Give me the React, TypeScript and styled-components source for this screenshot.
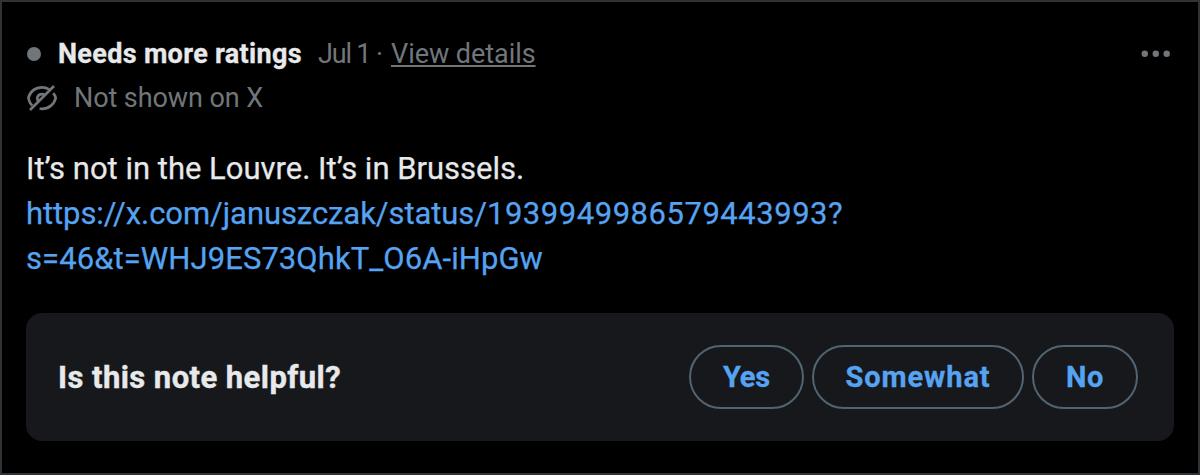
import React from 'react';
import styled, { createGlobalStyle } from 'styled-components';

const GlobalStyle = createGlobalStyle`
  * { box-sizing: border-box; }
  body { margin: 0; background: #000; }
`;

const Card = styled.article`
  width: 1200px;
  height: 475px;
  padding: 30px 24px 0;
  border: 2px solid #2f3336;
  background: #000;
  color: #e7e9ea;
  font-family: Roboto, "Liberation Sans", sans-serif;
  white-space: nowrap;
`;

const StatusRow = styled.header`
  display: flex;
  align-items: center;
  height: 44px;
  font-size: 27px;
  color: #71767b;
`;

const StatusDot = styled.span`
  width: 14px;
  height: 14px;
  margin: 0 17px 0 1px;
  border-radius: 50%;
  background: #71767b;
`;

const Status = styled.strong`
  width: 260px;
  font-weight: 700;
  letter-spacing: 0.32px;
  color: #e7e9ea;
  -webkit-text-stroke: 0.3px currentColor;
`;

const DateText = styled.span`
  width: 58px;
  letter-spacing: -1.1px;
  word-spacing: -0.5px;
`;

const Separator = styled.span`
  width: 15px;
`;

const DetailsLink = styled.a`
  letter-spacing: -0.05px;
  text-decoration: underline;
  text-decoration-thickness: 2px;
  text-underline-offset: 2px;
`;

const MoreButton = styled.button`
  display: flex;
  margin-left: auto;
  margin-right: 4px;
  padding: 0;
  border: 0;
  background: none;
  color: #71767b;
`;

const VisibilityRow = styled.div`
  display: flex;
  align-items: center;
  gap: 16px;
  height: 44px;
  font-size: 27px;
  letter-spacing: -0.08px;
  color: #71767b;
`;

const NoteText = styled.p`
  margin: 26px 0 0;
  font-size: 31px;
  line-height: 45px;
  -webkit-text-stroke: 0.25px currentColor;
`;

const NoteLine = styled.span`
  display: block;
`;

const Tracked = styled.span<{ $tracking: number }>`
  letter-spacing: ${({ $tracking }) => $tracking}px;
`;

const NoteLink = styled.a`
  color: #56a3f1;
`;

const RatingPanel = styled.section`
  display: flex;
  align-items: center;
  justify-content: space-between;
  height: 128px;
  margin-top: 32px;
  padding: 0 36px 0 32px;
  border-radius: 16px;
  background: #16181c;
`;

const Question = styled.h2`
  margin: 0;
  font-size: 31px;
  font-weight: 700;
  letter-spacing: 0.43px;
  -webkit-text-stroke: 0.4px currentColor;
`;

const Choices = styled.div`
  display: flex;
  gap: 8px;
`;

const Choice = styled.button<{ $width: number; $tracking: number }>`
  width: ${({ $width }) => $width}px;
  height: 64px;
  padding: 0;
  border: 2px solid #536471;
  border-radius: 32px;
  background: transparent;
  color: #56a3f1;
  font: 700 29px Roboto, "Liberation Sans", sans-serif;
  letter-spacing: ${({ $tracking }) => $tracking}px;
  -webkit-text-stroke: 0.3px currentColor;
`;

const choices = [
  { label: 'Yes', width: 115, tracking: -0.2 },
  { label: 'Somewhat', width: 212, tracking: 0.9 },
  { label: 'No', width: 106, tracking: 0.6 },
];

const HiddenIcon = () => (
  <svg width="32" height="32" viewBox="0 0 32 32" fill="none" stroke="currentColor" strokeWidth="2.7">
    <path d="M6.2 23.6C4.2 21.6 2.9 19 2.4 16C4 9.4 9.4 5.3 16 5.3C18.7 5.3 21 6 23.2 7.3" />
    <path d="M27.2 11.2C28.6 12.6 29.4 14.2 29.7 16C28.2 22.6 22.6 26.8 16 26.8C15.2 26.8 14.4 26.7 13.6 26.5" />
    <path d="M12.4 19.2C9.9 16.2 12 12.2 15.8 12.2C17.1 12.2 18.2 12.6 19 13.2" />
    <path d="M4 28L28 4" />
  </svg>
);

const MoreIcon = () => (
  <svg width="29" height="8" viewBox="0 0 29 8" fill="currentColor">
    <circle cx="3.8" cy="3.8" r="3.2" />
    <circle cx="14.8" cy="3.8" r="3.2" />
    <circle cx="25.7" cy="3.8" r="3.2" />
  </svg>
);

export default function App() {
  return (
    <>
      <GlobalStyle />
      <Card>
        <StatusRow>
          <StatusDot />
          <Status>Needs more ratings</Status>
          <DateText>Jul 1</DateText>
          <Separator>·</Separator>
          <DetailsLink>View details</DetailsLink>
          <MoreButton aria-label="More">
            <MoreIcon />
          </MoreButton>
        </StatusRow>
        <VisibilityRow>
          <HiddenIcon />
          <span>Not shown on X</span>
        </VisibilityRow>
        <NoteText>
          <NoteLine>It’s not in the Louvre. It’s in Brussels.</NoteLine>
          <NoteLink>
            <NoteLine>
              <Tracked $tracking={-0.08}>https://x.com/januszczak/status/</Tracked>
              <Tracked $tracking={0.53}>1939949986579443993?</Tracked>
            </NoteLine>
            <NoteLine>
              <Tracked $tracking={0.07}>s=46&amp;t=WHJ9ES73QhkT_O6A-iHpGw</Tracked>
            </NoteLine>
          </NoteLink>
        </NoteText>
        <RatingPanel>
          <Question>Is this note helpful?</Question>
          <Choices>
            {choices.map(({ label, width, tracking }) => (
              <Choice key={label} $width={width} $tracking={tracking}>
                {label}
              </Choice>
            ))}
          </Choices>
        </RatingPanel>
      </Card>
    </>
  );
}
